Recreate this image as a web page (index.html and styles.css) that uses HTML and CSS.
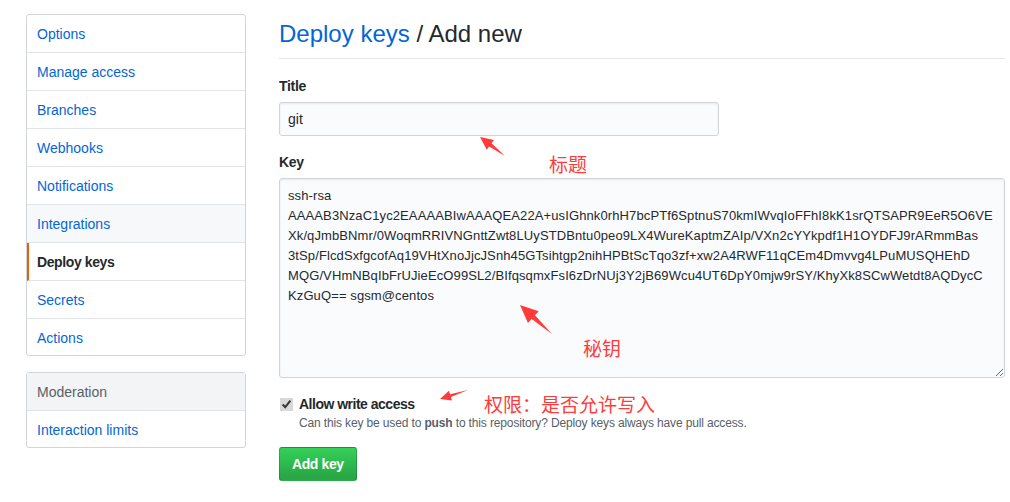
FILE: index.html
```html
<!DOCTYPE html>
<html lang="en">
<head>
<meta charset="utf-8">
<title>Deploy keys / Add new</title>
<link rel="stylesheet" href="styles.css">
</head>
<body>
<div class="page">
  <aside class="sidebar">
    <nav class="menu">
      <a class="menu-item">Options</a>
      <a class="menu-item">Manage access</a>
      <a class="menu-item">Branches</a>
      <a class="menu-item">Webhooks</a>
      <a class="menu-item">Notifications</a>
      <a class="menu-item hover">Integrations</a>
      <a class="menu-item selected">Deploy keys</a>
      <a class="menu-item">Secrets</a>
      <a class="menu-item">Actions</a>
    </nav>
    <nav class="menu">
      <div class="menu-heading">Moderation</div>
      <a class="menu-item">Interaction limits</a>
    </nav>
  </aside>
  <main class="main">
    <h2 class="subhead"><a class="crumb">Deploy keys</a> / Add new</h2>
    <form class="form">
      <label class="label">Title</label>
      <input class="input" type="text" value="git">
      <label class="label label-key">Key</label>
      <textarea class="textarea" wrap="off">ssh-rsa
AAAAB3NzaC1yc2EAAAABIwAAAQEA22A+usIGhnk0rhH7bcPTf6SptnuS70kmIWvqIoFFhI8kK1srQTSAPR9EeR5O6VE
Xk/qJmbBNmr/0WoqmRRIVNGnttZwt8LUySTDBntu0peo9LX4WureKaptmZAIp/VXn2cYYkpdf1H1OYDFJ9rARmmBas
3tSp/FlcdSxfgcofAq19VHtXnoJjcJSnh45GTsihtgp2nihHPBtScTqo3zf+xw2A4RWF11qCEm4Dmvvg4LPuMUSQHEhD
MQG/VHmNBqIbFrUJieEcO99SL2/BIfqsqmxFsI6zDrNUj3Y2jB69Wcu4UT6DpY0mjw9rSY/KhyXk8SCwWetdt8AQDycC
KzGuQ== sgsm@centos</textarea>
      <div class="check">
        <label class="check-label"><input class="checkbox" type="checkbox" checked> Allow write access</label>
        <p class="note">Can this key be used to <strong>push</strong> to this repository? Deploy keys always have pull access.</p>
      </div>
      <button class="btn" type="button">Add key</button>
    </form>
  </main>
</div>

<div class="ann ann-title">标题</div>
<div class="ann ann-key">秘钥</div>
<div class="ann ann-perm">权限：是否允许写入</div>
<svg class="arrows" width="1010" height="502" viewBox="0 0 1010 502">
  <polygon points="505,156 491.56,143.28 493.98,140.09 480,137 486.72,149.65 489.14,146.46" />
  <polygon points="552,334 535.01,315.23 538.7,311.15 520,305 527.96,323.01 531.65,318.93" />
  <polygon points="468,390 450.01,394.2 448.94,390.87 440,399 452,400.39 450.93,397.06" />
</svg>
</body>
</html>
```

FILE: styles.css
```css
* { box-sizing: border-box; }

body {
  margin: 0;
  background: #fff;
  font-family: "Liberation Sans", Arial, sans-serif;
  font-size: 14px;
  color: #24292e;
}

.page {
  display: flex;
  gap: 33px;
  padding: 14px 5px 0 26px;
}

.sidebar {
  width: 220px;
  flex: none;
  display: flex;
  flex-direction: column;
  gap: 16px;
}

.menu {
  border: 1px solid #d1d5da;
  border-radius: 3px;
  background: #fff;
  display: flex;
  flex-direction: column;
  overflow: hidden;
}

.menu-item, .menu-heading {
  display: block;
  height: 38px;
  line-height: 20px;
  padding: 9px 10px 8px;
  border-bottom: 1px solid #e1e4e8;
  color: #0366d6;
  text-decoration: none;
}

.menu-item:last-child { border-bottom: 0; height: 36px; }

.menu-item.hover { background: #f6f8fa; }

.menu-item.selected {
  color: #24292e;
  font-weight: 600;
  letter-spacing: -0.4px;
  border-left: 2px solid #e36209;
  padding-left: 8px;
}

.menu-heading {
  background: #f3f4f6;
  color: #586069;
}

.main {
  flex: 1;
  min-width: 0;
}

.subhead {
  margin: 0;
  padding: 2px 0 6px;
  font-size: 24px;
  font-weight: 400;
  line-height: 36px;
  border-bottom: 1px solid #e1e4e8;
  color: #24292e;
}

.crumb { color: #0366d6; text-decoration: none; }

.form {
  display: flex;
  flex-direction: column;
  align-items: flex-start;
  padding-top: 17px;
}

.label {
  font-weight: 600;
  letter-spacing: -0.3px;
  line-height: 20px;
  margin-bottom: 6px;
}

.label-key { margin-top: 16px; }

.input {
  width: 440px;
  height: 34px;
  padding: 6px 8px;
  font: inherit;
  font-size: 14px;
  color: #24292e;
  background: #fafbfc;
  border: 1px solid #d1d5da;
  border-radius: 3px;
  box-shadow: inset 0 1px 2px rgba(27, 31, 35, 0.075);
}

.textarea {
  width: 100%;
  height: 200px;
  padding: 7px 8px;
  font-family: "Liberation Sans", Arial, sans-serif;
  font-size: 13px;
  letter-spacing: 0.11px;
  line-height: 20px;
  color: #24292e;
  background: #fafbfc;
  border: 1px solid #d1d5da;
  border-radius: 3px;
  box-shadow: inset 0 1px 2px rgba(27, 31, 35, 0.075);
  white-space: pre;
  overflow: hidden;
  resize: vertical;
}

.check {
  margin-top: 16px;
  padding-left: 20px;
  position: relative;
}

.check-label {
  font-weight: 600;
  letter-spacing: -0.5px;
  line-height: 20px;
  display: block;
}

.checkbox {
  position: absolute;
  left: 0;
  top: 3px;
  margin: 1px 0 0 1px;
  width: 13px;
  height: 13px;
  accent-color: #d9d9d9;
}

.note {
  margin: 1px 0 0;
  font-size: 12px;
  letter-spacing: -0.14px;
  line-height: 16px;
  color: #586069;
}

.btn {
  margin-top: 16px;
  height: 34px;
  padding: 6px 12px;
  font: inherit;
  font-weight: 600;
  font-size: 14px;
  letter-spacing: -0.4px;
  line-height: 20px;
  color: #fff;
  background: linear-gradient(-180deg, #34d058 0%, #28a745 90%);
  border: 1px solid rgba(27, 31, 35, 0.2);
  border-radius: 3px;
}

.ann {
  position: absolute;
  font-family: "Noto Sans CJK SC", sans-serif;
  font-size: 19px;
  line-height: 24px;
  color: #ff3b3b;
  white-space: nowrap;
}

.ann-title { left: 549px; top: 152px; }
.ann-key { left: 583px; top: 336px; }
.ann-perm { left: 484px; top: 392px; }

.arrows {
  position: absolute;
  left: 0;
  top: 0;
  pointer-events: none;
}

.arrows polygon { fill: #ff3b3b; }
```
